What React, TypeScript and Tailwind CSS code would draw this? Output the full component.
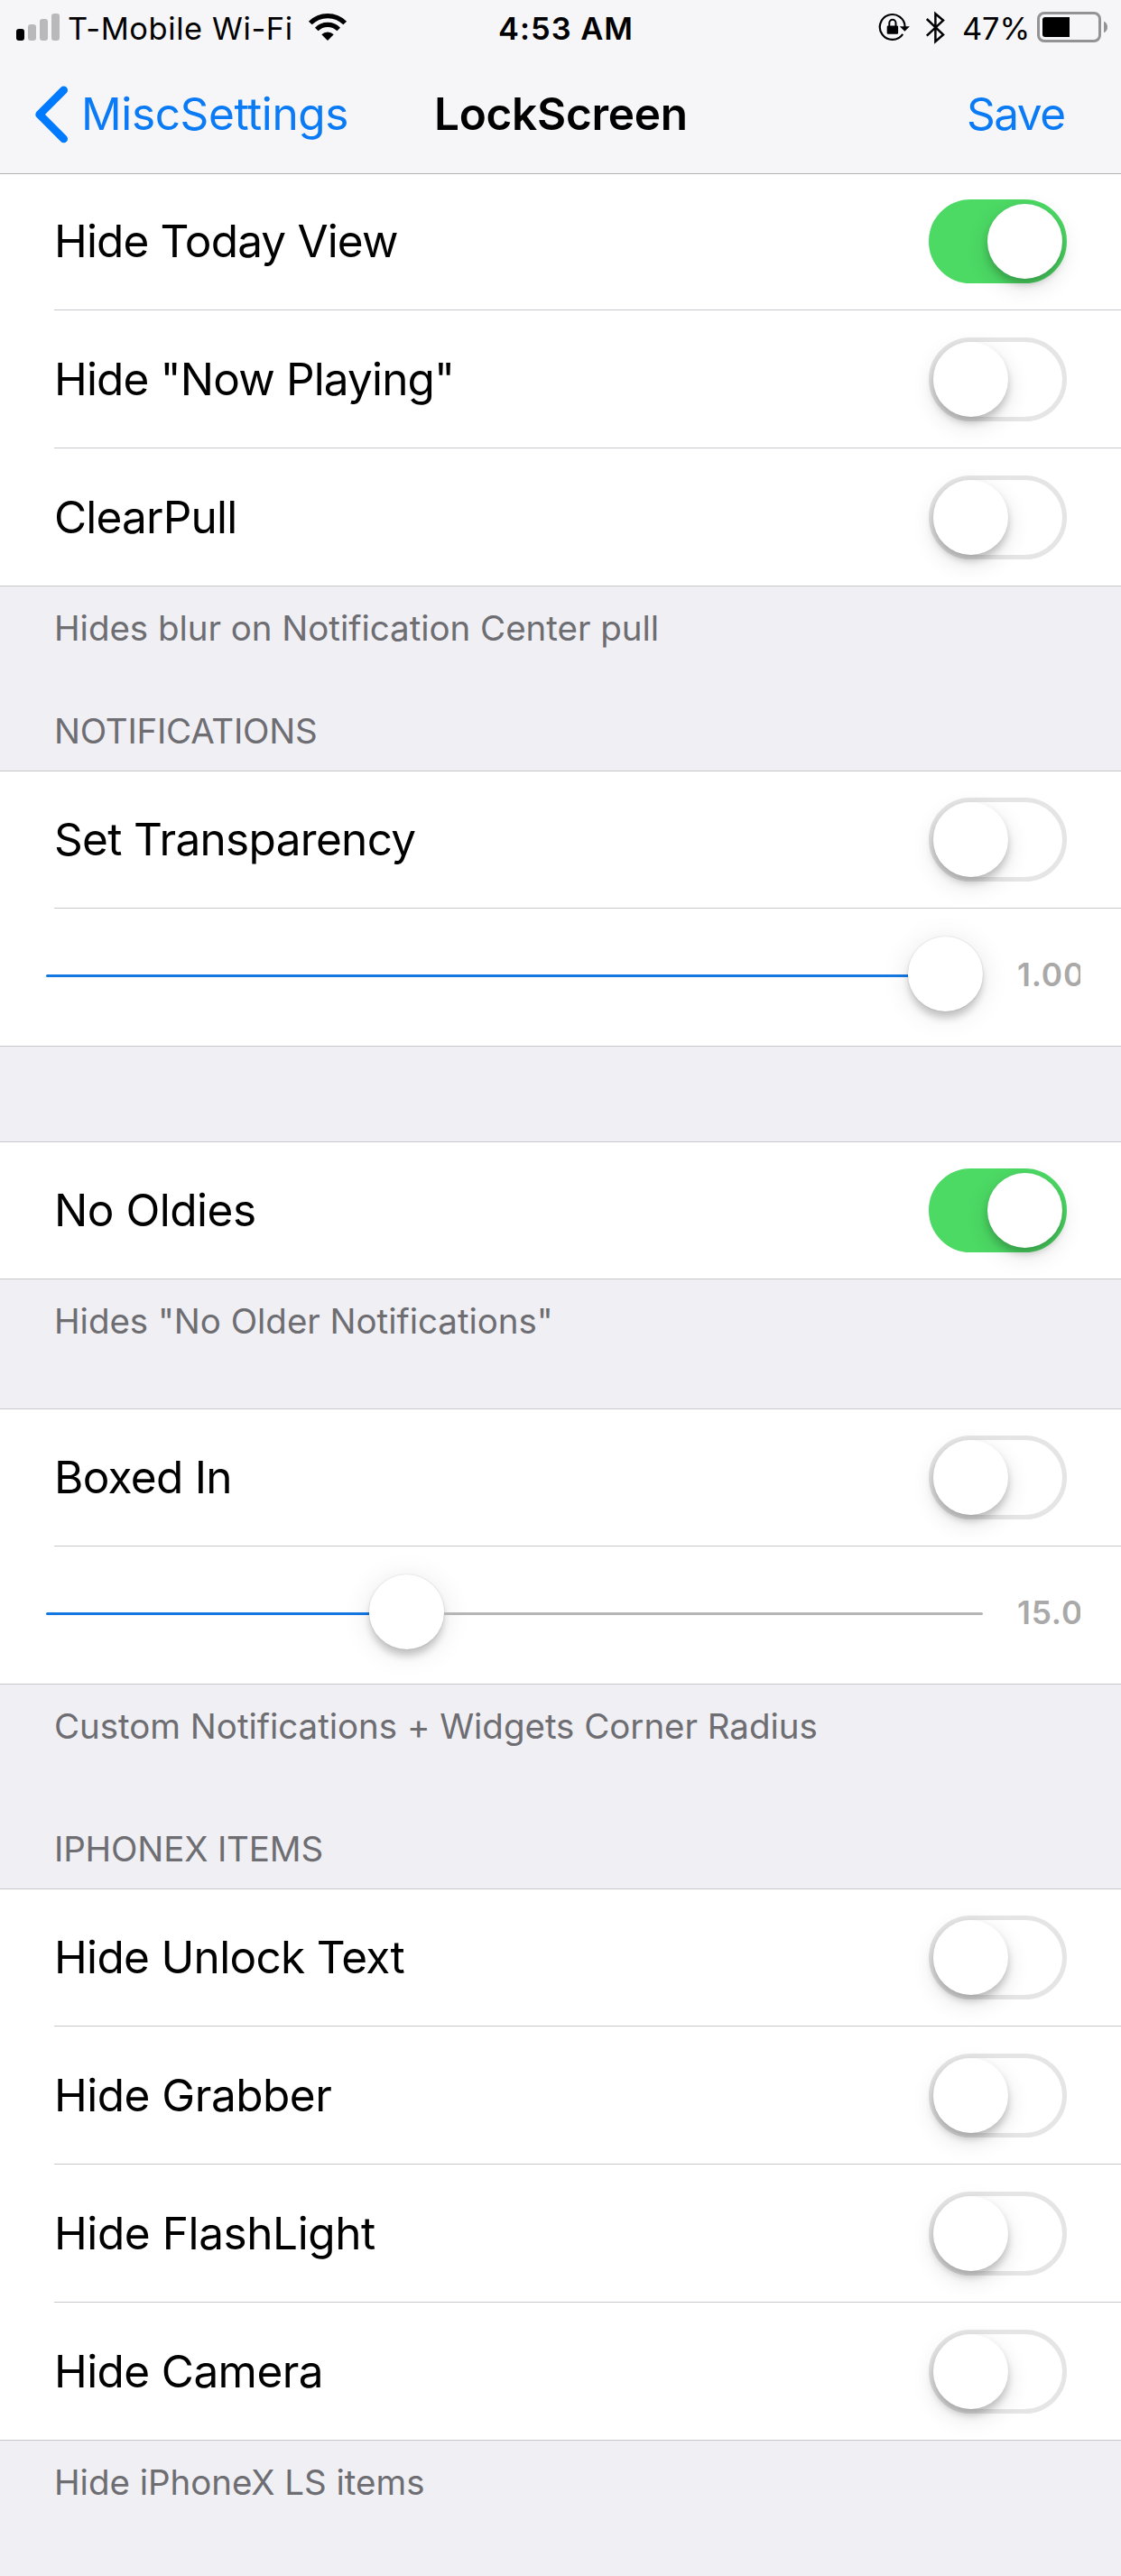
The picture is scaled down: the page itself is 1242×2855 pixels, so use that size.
import React, { useState } from "react";

function SignalBars() {
  return (
    <svg className="ml-[17px] h-[63px] w-[50px] shrink-0" viewBox="17 0 50 63">
      <rect x="18" y="32" width="9" height="13" rx="3" fill="#000" />
      <rect x="31" y="27" width="9" height="18" rx="3" fill="#b9b9bb" />
      <rect x="44" y="21" width="9" height="24" rx="3" fill="#b9b9bb" />
      <rect x="57" y="15" width="9" height="30" rx="3" fill="#b9b9bb" />
    </svg>
  );
}

function WifiIcon() {
  return (
    <svg className="h-[63px] w-[44px] shrink-0" viewBox="341 0 44 63" fill="none">
      <path d="M343.8 25.5A27.1 27.1 0 0 1 382.2 25.5" stroke="#000" strokeWidth="5.3" />
      <path d="M350.8 32.5A17.2 17.2 0 0 1 375.2 32.5" stroke="#000" strokeWidth="5.1" />
      <path d="M363 44.9L356.3 38.2A9.5 9.5 0 0 1 369.7 38.2Z" fill="#000" />
    </svg>
  );
}

function RotationLockIcon() {
  return (
    <svg className="h-[63px] w-[36px] shrink-0" viewBox="973 0 36 63" fill="none">
      <path d="M1002.6 30A13.9 13.9 0 1 0 1000.2 37.8" stroke="#000" strokeWidth="2.2" />
      <path d="M996.8 29.2H1007.9L1002.4 34.7Z" fill="#000" />
      <rect x="982.7" y="28.5" width="12.4" height="9.2" rx="1.2" fill="#000" />
      <path d="M985.3 29V25.4A3.6 3.6 0 0 1 992.5 25.4V29" stroke="#000" strokeWidth="2" />
    </svg>
  );
}

function BluetoothIcon() {
  return (
    <svg className="ml-[16px] h-[63px] w-[24px] shrink-0" viewBox="1025 0 24 63" fill="none">
      <path
        d="M1026.8 21L1045 38.4L1036.4 45.9V15.2L1045 22.6L1026.8 39.6"
        stroke="#000"
        strokeWidth="2.5"
      />
    </svg>
  );
}

function BatteryIcon() {
  return (
    <svg className="h-[63px] w-[80px] shrink-0" viewBox="1148 0 80 63" fill="none">
      <rect x="1150.5" y="14.5" width="68" height="31" rx="6.5" stroke="#939395" strokeWidth="3" />
      <path d="M1158 19H1185V41H1158A3 3 0 0 1 1155 38V22A3 3 0 0 1 1158 19Z" fill="#000" />
      <path d="M1223 23.7Q1227 25.5 1227 30T1223 36.3Z" fill="#939395" />
    </svg>
  );
}

function StatusBar() {
  return (
    <div className="flex h-[63px] items-center text-[34.4px] leading-[41px] whitespace-nowrap text-black">
      <div className="flex w-[552px] items-center">
        <SignalBars />
        <span className="ml-[8px] w-[266px] tracking-[0.6px]">T-Mobile Wi-Fi</span>
        <WifiIcon />
      </div>
      <span className="font-semibold tracking-[1.05px]">4:53 AM</span>
      <div className="ml-auto flex items-center pr-[14px]">
        <RotationLockIcon />
        <BluetoothIcon />
        <span className="ml-[17px] w-[82px] tracking-[-0.14px]">47%</span>
        <BatteryIcon />
      </div>
    </div>
  );
}

function NavBar() {
  return (
    <div className="flex h-[130px] items-center border-b border-[#b2b2b4] pb-[2px] text-[49.5px] leading-[60px] whitespace-nowrap">
      <button className="flex w-[481px] items-center text-[#0a7af5]">
        <svg className="ml-[36px] h-[68px] w-[42px]" viewBox="36 92.5 42 68" fill="none">
          <path
            d="M70.6 99.4L43.7 126.4L70.6 153.4"
            stroke="#007aff"
            strokeWidth="8.8"
            strokeLinecap="round"
            strokeLinejoin="round"
          />
        </svg>
        <span className="ml-[12px] pb-[2px] tracking-[-0.38px]">MiscSettings</span>
      </button>
      <h1 className="pb-[2px] font-semibold tracking-[-0.29px] text-black">LockScreen</h1>
      <button className="ml-auto w-[171px] pb-[2px] text-left tracking-[-1.5px] text-[#0a7af5]">Save</button>
    </div>
  );
}

function Switch({ initial = false }: { initial?: boolean }) {
  const [on, setOn] = useState(initial);
  return (
    <button
      role="switch"
      aria-checked={on}
      onClick={() => setOn(!on)}
      className={
        "mr-[60px] flex h-[93px] w-[153px] shrink-0 rounded-full border-5 " +
        (on ? "justify-end border-[#4cd964] bg-[#4cd964]" : "justify-start border-[#e5e5e5] bg-white")
      }
    >
      <span className="size-[83px] rounded-full bg-white shadow-[0_9px_26px_rgba(0,0,0,0.12),0_6px_8px_rgba(0,0,0,0.2)]" />
    </button>
  );
}

type RowProps = { label: string; on?: boolean; tracking?: string; height?: string; last?: boolean };

function SwitchRow({ label, on, tracking = "tracking-[-0.8px]", height = "h-[153px]", last }: RowProps) {
  return (
    <div className={"flex " + height + (last ? " border-b border-[#c8c7cc]" : " pl-[60px]")}>
      <div
        className={
          "flex flex-1 items-center justify-between " + (last ? "pl-[60px]" : "border-b border-[#c8c7cc]")
        }
      >
        <span className={"pb-px text-[49.5px] leading-[60px] whitespace-nowrap text-black " + tracking}>
          {label}
        </span>
        <Switch initial={on} />
      </div>
    </div>
  );
}

function SliderRow({ fill, value }: { fill: string; value: string }) {
  return (
    <div className="flex h-[153px] items-start border-b border-[#c8c7cc] pl-[51px]">
      <div className="flex w-[1038px] items-start">
        <div className={"mt-[73px] h-[3px] rounded-l-full bg-[#1577e2] " + fill} />
        <div className="mt-[31px] size-[83px] shrink-0 rounded-full bg-white shadow-[0_0_2px_rgba(0,0,0,0.16),0_8px_9px_-1px_rgba(0,0,0,0.2),0_4px_32px_rgba(0,0,0,0.1)]" />
        <div className="mt-[73px] h-[3px] flex-1 rounded-r-full bg-[#b5b5b5]" />
      </div>
      <span className="mt-[53px] ml-[38px] w-[70px] overflow-hidden text-[35.3px] leading-[42px] font-semibold tracking-[0.8px] whitespace-nowrap text-[#a9a9a9]">
        {value}
      </span>
    </div>
  );
}

function Footer({ children, className }: { children: React.ReactNode; className: string }) {
  return (
    <p className={"pt-[23px] pl-[60px] text-[38.5px] leading-[46px] tracking-[-0.03px] text-[#6d6d72] " + className}>
      {children}
    </p>
  );
}

function Header({ children, className }: { children: React.ReactNode; className: string }) {
  return (
    <h2 className={"pb-[21px] pl-[60px] text-[38.5px] leading-[46px] text-[#6d6d72] uppercase " + className}>
      {children}
    </h2>
  );
}

function Group({ children }: { children: React.ReactNode }) {
  return <section className="border-t border-[#c8c7cc] bg-white">{children}</section>;
}

export default function App() {
  return (
    <div className="h-[2855px] w-[1242px] overflow-hidden bg-[#efeff4] font-['Inter',sans-serif]">
      <header className="bg-[#f6f6f8]">
        <StatusBar />
        <NavBar />
      </header>

      <section className="bg-white">
        <SwitchRow label="Hide Today View" on tracking="tracking-[-0.85px]" height="h-[151px] [&>div]:pb-[2px]" />
        <SwitchRow label={'Hide "Now Playing"'} tracking="tracking-[-0.85px]" />
        <SwitchRow label="ClearPull" last />
      </section>
      <Footer className="h-[116px]">Hides blur on Notification Center pull</Footer>

      <Header className="h-[88px] pt-[21px] tracking-[-0.24px]">Notifications</Header>
      <Group>
        <SwitchRow label="Set Transparency" tracking="tracking-[-0.68px]" height="h-[152px]" />
        <SliderRow fill="w-[955px]" value="1.00" />
      </Group>

      <div className="h-[105px]" />
      <Group>
        <SwitchRow label="No Oldies" on tracking="tracking-[-0.49px]" height="h-[152px]" last />
      </Group>
      <Footer className="h-[143px]">Hides "No Older Notifications"</Footer>

      <Group>
        <SwitchRow label="Boxed In" tracking="tracking-[-0.71px]" height="h-[152px]" />
        <SliderRow fill="w-[358px]" value="15.0" />
      </Group>
      <Footer className="h-[138px]">Custom Notifications + Widgets Corner Radius</Footer>

      <Header className="h-[88px] pt-[21px] tracking-[-0.16px]">iPhoneX Items</Header>
      <Group>
        <SwitchRow label="Hide Unlock Text" tracking="tracking-[-0.68px]" height="h-[152px]" />
        <SwitchRow label="Hide Grabber" tracking="tracking-[-0.5px]" />
        <SwitchRow label="Hide FlashLight" tracking="tracking-[-0.42px]" />
        <SwitchRow label="Hide Camera" tracking="tracking-[-0.6px]" last />
      </Group>
      <Footer className="h-[150px]">Hide iPhoneX LS items</Footer>
    </div>
  );
}
